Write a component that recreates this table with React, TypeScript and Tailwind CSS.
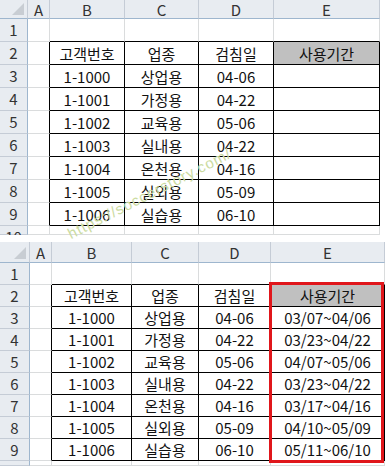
const rows = [
  ['고객번호', '업종', '검침일', '사용기간'],
  ['1-1000', '상업용', '04-06', '03/07~04/06'],
  ['1-1001', '가정용', '04-22', '03/23~04/22'],
  ['1-1002', '교육용', '05-06', '04/07~05/06'],
  ['1-1003', '실내용', '04-22', '03/23~04/22'],
  ['1-1004', '온천용', '04-16', '03/17~04/16'],
  ['1-1005', '실외용', '05-09', '04/10~05/09'],
  ['1-1006', '실습용', '06-10', '05/11~06/10'],
];

const letters = ['A', 'B', 'C', 'D', 'E'];

type SheetProps = {
  cols: number[];
  headH: number;
  rowH: number;
  tailH: number;
  filled: boolean;
};

// the table sits in rows 2..9, columns B..E
const inTable = (r: number, c: number) => r >= 2 && r <= 9 && c >= 1 && c <= 4;

function Sheet({ cols, headH, rowH, tailH, filled }: SheetProps) {
  const cornerW = cols[0];
  const widths = cols.slice(1);

  const cell = (r: number, c: number) => {
    const dark = inTable(r, c);
    const rightDark = dark || inTable(r, c + 1);
    const bottomDark = dark || inTable(r + 1, c);
    let text = '';
    if (dark) {
      const v = rows[r - 2][c - 1];
      text = c === 4 && r > 2 && !filled ? '' : v;
    }
    const gray = r === 2 && c === 4;
    return (
      <div
        key={c}
        style={{ width: widths[c] }}
        className={`flex shrink-0 items-center justify-center border-r border-b ${
          rightDark ? 'border-r-black' : 'border-r-[#dadcdd]'
        } ${bottomDark ? 'border-b-black' : 'border-b-[#dadcdd]'} ${gray ? 'bg-[#c0c0c0]' : 'bg-white'}`}
      >
        <span className="text-[15px] leading-none text-[#111]">{text}</span>
      </div>
    );
  };

  const body = [];
  for (let r = 1; r <= 10; r++) {
    body.push(
      <div key={r} className="flex overflow-hidden" style={{ height: r === 10 ? tailH : rowH }}>
        <div
          style={{ width: cornerW }}
          className="flex shrink-0 items-start justify-center border-r border-b border-r-[#9eb6ce] border-b-[#c5ccd6] bg-[#e8ecf1]"
        >
          <span className="text-[15px] text-[#333]" style={{ lineHeight: `${rowH - 1}px` }}>
            {r}
          </span>
        </div>
        {widths.map((_, c) => cell(r, c))}
      </div>
    );
  }

  return (
    <div className="flex flex-col">
      <div className="flex" style={{ height: headH }}>
        <div
          style={{ width: cornerW }}
          className="relative shrink-0 border-r border-b border-r-[#c5ccd6] border-b-[#9eb6ce] bg-[#e8ecf1]"
        >
          <svg className="absolute right-[3px] bottom-[3px]" width="12" height="12" viewBox="0 0 12 12">
            <path d="M12 0 L12 12 L0 12 Z" fill="#c8cdd3" />
          </svg>
        </div>
        {letters.map((l, i) => (
          <div
            key={l}
            style={{ width: widths[i] }}
            className="flex shrink-0 items-center justify-center border-r border-b border-r-[#c5ccd6] border-b-[#9eb6ce] bg-[#e8ecf1]"
          >
            <span className="text-[15px] leading-none text-[#333]">{l}</span>
          </div>
        ))}
      </div>
      {body}
    </div>
  );
}

export default function App() {
  return (
    <div className="relative h-[466px] w-[385px] overflow-hidden bg-white font-['Noto_Sans_CJK_KR','Noto_Sans',sans-serif]">
      <Sheet cols={[28, 22, 75, 74, 75, 106]} headH={19} rowH={23} tailH={9} filled={false} />
      <div className="h-[7px] bg-white" />
      <div className="relative">
        <Sheet cols={[30, 22, 80, 67, 72, 114]} headH={21} rowH={22} tailH={5} filled={true} />
        <div className="absolute left-[269px] top-[40px] h-[181px] w-[115px] border-[3px] border-[#e0161b]" />
      </div>
      <div className="pointer-events-none absolute left-[72px] top-[226px] origin-bottom-left -rotate-[27deg] whitespace-nowrap font-['Liberation_Sans',sans-serif] text-[15px] leading-none tracking-[1px] text-[#cbdba0]">
        https://soccerstory.com/
      </div>
    </div>
  );
}
